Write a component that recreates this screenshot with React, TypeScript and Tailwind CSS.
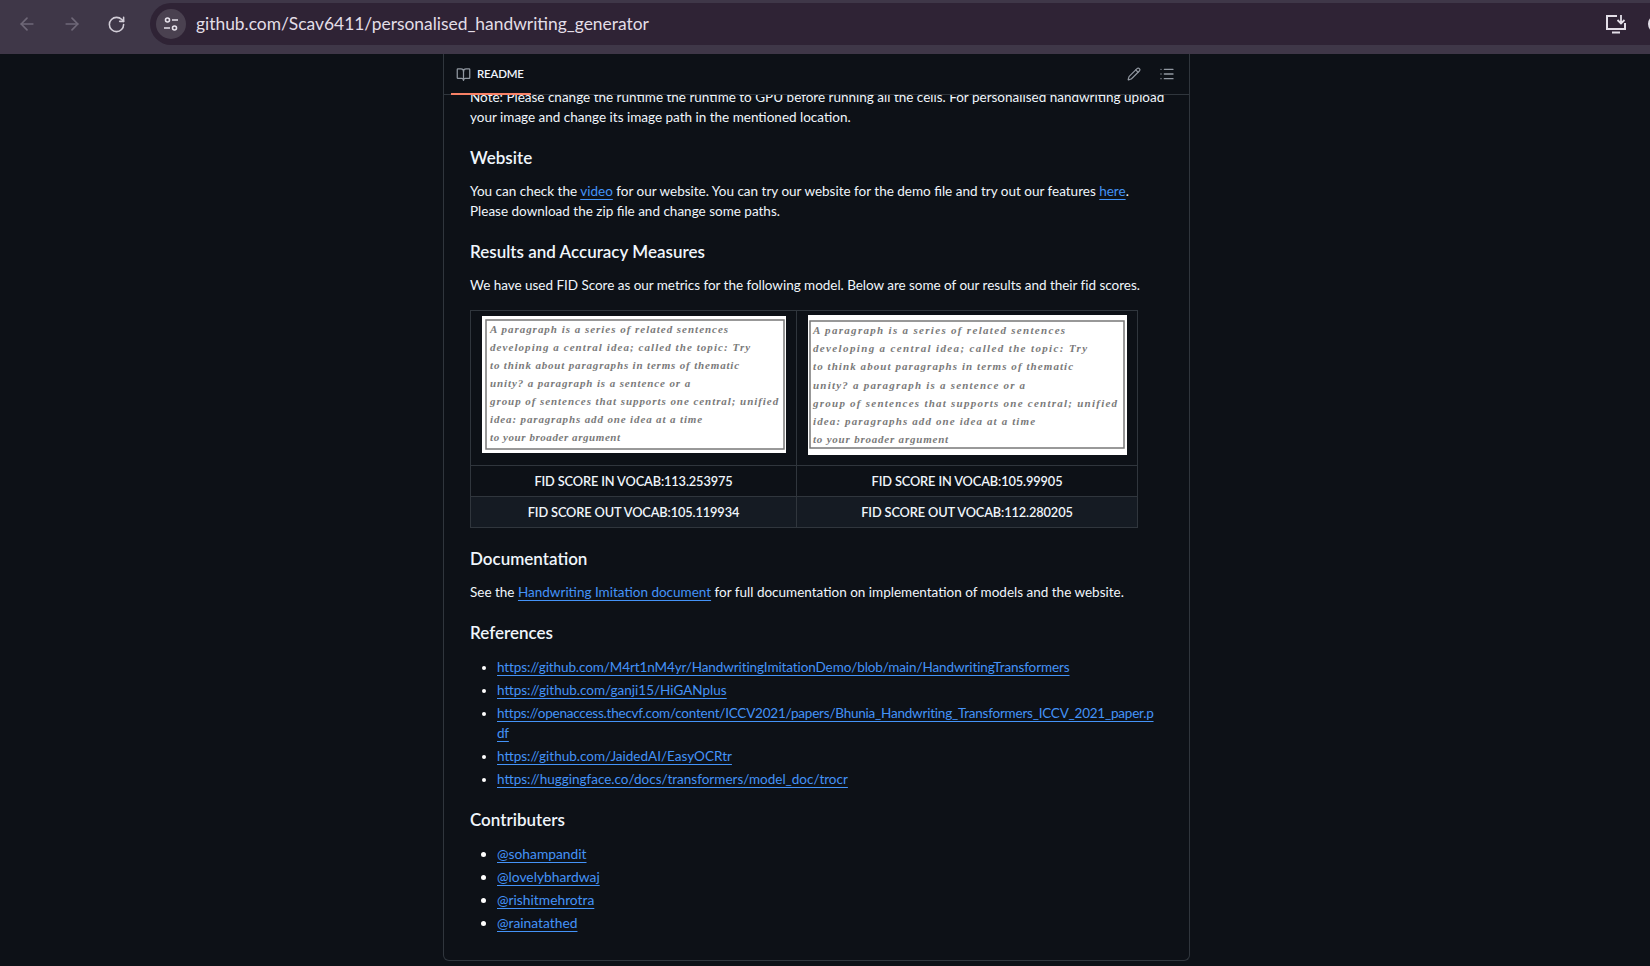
import { ArrowLeft, ArrowRight, RotateCw, BookOpen, Pencil, List } from 'lucide-react'

const leftLines = [
  { y: 17, w: 238, t: 'A paragraph is a series of related sentences' },
  { y: 35, w: 260, t: 'developing a central idea; called the topic: Try' },
  { y: 53, w: 249, t: 'to think about paragraphs in terms of thematic' },
  { y: 71, w: 200, t: 'unity? a paragraph is a sentence or a' },
  { y: 89, w: 288, t: 'group of sentences that supports one central; unified' },
  { y: 107, w: 212, t: 'idea: paragraphs add one idea at a time' },
  { y: 125, w: 130, t: 'to your broader argument' },
]

const rightLines = [
  { y: 19, w: 252, t: 'A paragraph is a series of related sentences' },
  { y: 37, w: 274, t: 'developing a central idea; called the topic: Try' },
  { y: 55, w: 260, t: 'to think about paragraphs in terms of thematic' },
  { y: 74, w: 212, t: 'unity? a paragraph is a sentence or a' },
  { y: 92, w: 304, t: 'group of sentences that supports one central; unified' },
  { y: 110, w: 222, t: 'idea: paragraphs add one idea at a time' },
  { y: 128, w: 135, t: 'to your broader argument' },
]

function Handwriting({ w, h, inner, x, lines }: { w: number; h: number; inner: [number, number, number, number]; x: number; lines: { y: number; w: number; t: string }[] }) {
  return (
    <svg width={w} height={h} viewBox={`0 0 ${w} ${h}`} className="block">
      <rect width={w} height={h} fill="#ffffff" />
      <rect x={inner[0]} y={inner[1]} width={inner[2]} height={inner[3]} fill="none" stroke="#777777" strokeWidth="1.5" />
      {lines.map((l) => (
        <text
          key={l.t}
          x={x}
          y={l.y}
          textLength={l.w}
          lengthAdjust="spacing"
          fontFamily="'Liberation Serif', serif"
          fontStyle="italic"
          fontSize="11"
          fill="#7a7a7a"
        >
          {l.t}
        </text>
      ))}
    </svg>
  )
}

function Link({ children }: { children: React.ReactNode }) {
  return <a className="text-[#4493f8] underline underline-offset-[3px]">{children}</a>
}

function H3({ children, className }: { children: React.ReactNode; className: string }) {
  return <h3 className={`text-[17px] leading-[22px] font-semibold text-[#f0f6fc] ${className}`}>{children}</h3>
}

export default function App() {
  return (
    <div className="w-[1650px] h-[966px] overflow-hidden bg-[#0d1117] text-[#f0f6fc] font-['Lato',sans-serif]">
      {/* Browser toolbar */}
      <div className="h-[54px] bg-[#3f3748] pt-[3px]">
        <div className="h-[42px] flex items-center relative">
          <div className="w-[150px] h-full flex items-center pl-[17px] gap-[25px]">
            <ArrowLeft size={20} className="text-[#6f6878]" />
            <ArrowRight size={20} className="text-[#6f6878]" />
            <RotateCw size={19} className="text-[#d3ced8]" />
          </div>
          <div className="flex-1 h-full bg-[#2f2335] rounded-l-full flex items-center pl-[6px] overflow-hidden">
            <div className="w-[30px] h-[30px] rounded-full bg-[#4a4150] flex items-center justify-center">
              <svg width="18" height="18" viewBox="0 0 18 18" fill="none" stroke="#e6e1ea" strokeWidth="1.6">
                <circle cx="5.5" cy="5" r="2" />
                <path d="M10 5h6" />
                <circle cx="12.5" cy="13" r="2" />
                <path d="M2 13h6" />
              </svg>
            </div>
            <span className="ml-[10px] pt-[1px] text-[17.4px] text-[#e3dee7]">
              github.com/Scav6411/personalised_handwriting_generator
            </span>
            <svg width="22" height="20" viewBox="0 0 22 20" fill="none" className="ml-auto shrink-0" stroke="#e3dee7" strokeWidth="2">
              <path d="M12 2H2v13h18V9" />
              <path d="M7 18.5h8" />
              <path d="M16 1v8M12.5 6l3.5 3.5L19.500 6" strokeWidth="1.8" />
            </svg>
            <div className="ml-[21px] mr-[-16px] w-[18px] h-[18px] shrink-0 rounded-full border-2 border-[#e3dee7]" />
          </div>
        </div>
      </div>

      {/* README card */}
      <div className="ml-[443px] w-[747px] h-[907px] border-x border-b border-[#30363d] rounded-b-md flex flex-col">
        <div className="h-[41px] shrink-0 border-b border-[#30363d] flex items-center pl-[12px] pr-[14px] relative">
          <BookOpen size={15} className="text-[#9198a1]" />
          <span className="ml-[6px] text-[11.5px] font-semibold tracking-[-0.02em] text-[#f0f6fc]">README</span>
          <Pencil size={14} className="ml-auto mr-[-2px] text-[#9198a1]" />
          <List size={16} className="ml-[20px] text-[#9198a1]" />
          <div className="absolute left-[7px] bottom-[-1px] w-[80px] h-[2px] bg-[#f78166]" />
        </div>

        <div className="flex-1 overflow-hidden px-[26px] text-[13.5px] leading-[20px] text-[#f0f6fc]">
          <p className="-mt-[8px] whitespace-nowrap">
            Note: Please change the runtime the runtime to GPU before running all the cells. For personalised handwriting upload
            <br />
            your image and change its image path in the mentioned location.
          </p>

          <H3 className="mt-[20px]">Website</H3>
          <p className="mt-[12px]">
            You can check the <Link>video</Link> for our website. You can try our website for the demo file and try out our features <Link>here</Link>.
            <br />
            Please download the zip file and change some paths.
          </p>

          <H3 className="mt-[20px]">Results and Accuracy Measures</H3>
          <p className="mt-[12px] tracking-[-0.03px]">
            We have used FID Score as our metrics for the following model. Below are some of our results and their fid scores.
          </p>

          <div className="mt-[15px] w-[668px] border border-[#30363d] grid grid-cols-[326px_1fr] font-semibold text-center text-[12.8px] tracking-[-0.01em]">
            <div className="h-[155px] border-r border-b border-[#30363d] pl-[11px] pt-[5px]">
              <Handwriting w={304} h={137} inner={[4, 4, 298, 129]} x={8} lines={leftLines} />
            </div>
            <div className="h-[155px] border-b border-[#30363d] pl-[11px] pt-[4px]">
              <Handwriting w={319} h={140} inner={[2, 6, 314, 127]} x={5} lines={rightLines} />
            </div>
            <div className="h-[31px] border-r border-b border-[#30363d] flex items-center justify-center">FID SCORE IN VOCAB:113.253975</div>
            <div className="h-[31px] border-b border-[#30363d] flex items-center justify-center">FID SCORE IN VOCAB:105.99905</div>
            <div className="h-[30px] border-r border-[#30363d] bg-[#151b23] flex items-center justify-center">FID SCORE OUT VOCAB:105.119934</div>
            <div className="h-[30px] bg-[#151b23] flex items-center justify-center">FID SCORE OUT VOCAB:112.280205</div>
          </div>

          <H3 className="mt-[20px]">Documentation</H3>
          <p className="mt-[12px]">
            See the <Link>Handwriting Imitation document</Link> for full documentation on implementation of models and the website.
          </p>

          <H3 className="mt-[20px]">References</H3>
          <ul className="mt-[13px] list-disc pl-[27px] marker:text-white">
            <li className="tracking-[-0.1px]"><Link>https://github.com/M4rt1nM4yr/HandwritingImitationDemo/blob/main/HandwritingTransformers</Link></li>
            <li className="mt-[3px]"><Link>https://github.com/ganji15/HiGANplus</Link></li>
            <li className="mt-[3px] tracking-[-0.22px]"><Link>https://openaccess.thecvf.com/content/ICCV2021/papers/Bhunia_Handwriting_Transformers_ICCV_2021_paper.p<br />df</Link></li>
            <li className="mt-[3px]"><Link>https://github.com/JaidedAI/EasyOCRtr</Link></li>
            <li className="mt-[3px]"><Link>https://huggingface.co/docs/transformers/model_doc/trocr</Link></li>
          </ul>

          <H3 className="mt-[20px]">Contributers</H3>
          <ul className="mt-[13px] list-disc pl-[27px] text-[13.8px] marker:text-white">
            <li><Link>@sohampandit</Link></li>
            <li className="mt-[3px]"><Link>@lovelybhardwaj</Link></li>
            <li className="mt-[3px]"><Link>@rishitmehrotra</Link></li>
            <li className="mt-[3px]"><Link>@rainatathed</Link></li>
          </ul>
        </div>
      </div>
    </div>
  )
}
